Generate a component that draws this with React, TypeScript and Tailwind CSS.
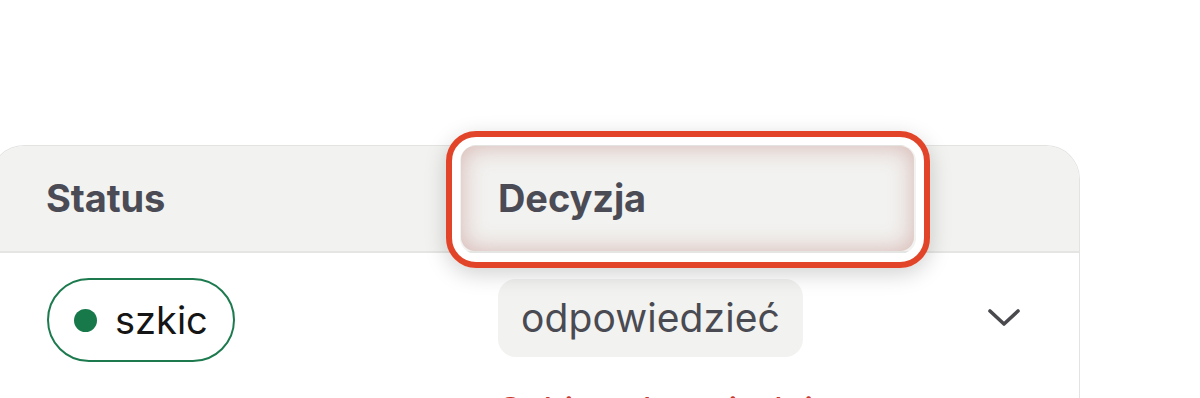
export default function App() {
  return (
    <div className="min-h-screen w-full overflow-hidden bg-white font-['Inter','Noto_Sans',sans-serif]">
      <div className="mt-[145px] -ml-[10px] w-[1090px] rounded-t-[34px] border border-b-0 border-[#e3e3e1]">
        {/* Header */}
        <div className="grid h-[107px] grid-cols-[470px_453px_1fr] rounded-t-[33px] border-b-2 border-[#e5e5e3] bg-[#f2f2f0]">
          <div className="flex items-center pl-[55px] text-[38px] font-bold tracking-[-0.1px] text-[#4b4b55]">
            Status
          </div>
          <div className="relative flex items-center">
            <div className="flex h-full w-full items-center rounded-[14px] pl-[37px] text-[38px] font-bold tracking-[-0.1px] text-[#4b4b55] shadow-[inset_0_0_24px_rgba(175,95,85,0.42)]">
              Decyzja
            </div>
            {/* highlight ring */}
            <div className="pointer-events-none absolute -top-[15px] -bottom-[17px] -left-[15px] -right-[16px] z-10 rounded-[30px] border-[6px] border-[#e2442a] shadow-[inset_0_0_0_8px_#ffffff,0_6px_22px_rgba(0,0,0,0.18)]" />
          </div>
          <div />
        </div>

        {/* Row */}
        <div className="grid grid-cols-[470px_453px_1fr] pt-[25px]">
          <div className="pl-[56px]">
            <div className="inline-flex h-[84px] items-center gap-[18px] rounded-full border-2 border-[#1d7a4f] pl-[25px] pr-[25px]">
              <span className="h-[23px] w-[23px] rounded-full bg-[#17784a]" />
              <span className="text-[38px] leading-none text-[#151515]">szkic</span>
            </div>
          </div>
          <div className="flex flex-col items-start pl-[37px] pt-px">
            <div className="flex h-[78px] items-center rounded-[18px] bg-[#f2f2f0] px-[23px] text-[39px] tracking-[0.1px] text-[#4a4a52]">
              odpowiedzieć
            </div>
            <div className="mt-[32px] text-[38px] leading-[1.2] text-[#c8392b]">Szkic odpowiedzi</div>
          </div>
          <div className="flex h-[79px] items-center pl-[73px] pt-px">
            <svg width="34" height="20" viewBox="0 0 34 20" fill="none">
              <polyline
                points="3,3 17,16 31,3"
                stroke="#4a4a4e"
                strokeWidth="3.6"
                strokeLinecap="round"
                strokeLinejoin="round"
              />
            </svg>
          </div>
        </div>
      </div>
    </div>
  );
}
